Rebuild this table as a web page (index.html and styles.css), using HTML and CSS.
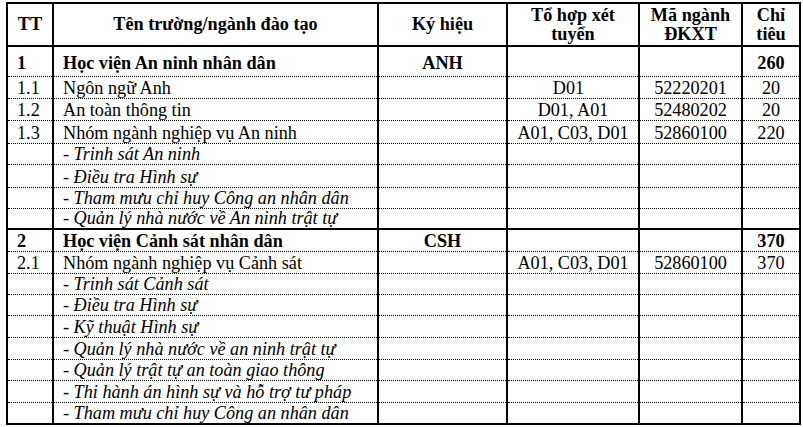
FILE: index.html
```html
<!DOCTYPE html>
<html lang="vi">
<head>
<meta charset="utf-8">
<title>Chỉ tiêu tuyển sinh</title>
<link rel="stylesheet" href="styles.css">
</head>
<body>
<table class="grid">
  <colgroup>
    <col class="c-tt"><col class="c-name"><col class="c-code"><col class="c-combo"><col class="c-major"><col class="c-quota">
  </colgroup>
  <thead>
    <tr class="head">
      <th>TT</th>
      <th>Tên trường/ngành đào tạo</th>
      <th>Ký hiệu</th>
      <th>Tổ hợp xét<br>tuyển</th>
      <th>Mã ngành<br>ĐKXT</th>
      <th>Chỉ<br>tiêu</th>
    </tr>
  </thead>
  <tbody>
    <tr class="school first h30">
      <td class="num">1</td><td>Học viện An ninh nhân dân</td><td class="ctr">ANH</td><td></td><td></td><td class="ctr">260</td>
    </tr>
    <tr class="h22">
      <td class="num">1.1</td><td>Ngôn ngữ Anh</td><td></td><td class="ctr">D01&nbsp;&nbsp;</td><td class="ctr">52220201</td><td class="ctr">20</td>
    </tr>
    <tr class="h22">
      <td class="num">1.2</td><td>An toàn thông tin</td><td></td><td class="ctr">D01, A01</td><td class="ctr">52480202</td><td class="ctr">20</td>
    </tr>
    <tr class="h23">
      <td class="num">1.3</td><td>Nhóm ngành nghiệp vụ An ninh</td><td></td><td class="ctr">A01, C03, D01</td><td class="ctr">52860100</td><td class="ctr">220</td>
    </tr>
    <tr class="sub h21">
      <td></td><td>- Trinh sát An ninh</td><td></td><td></td><td></td><td></td>
    </tr>
    <tr class="sub h23">
      <td></td><td>- Điều tra Hình sự</td><td></td><td></td><td></td><td></td>
    </tr>
    <tr class="sub h21">
      <td></td><td>- Tham mưu chỉ huy Công an nhân dân</td><td></td><td></td><td></td><td></td>
    </tr>
    <tr class="sub h21 end">
      <td></td><td>- Quản lý nhà nước về An ninh trật tự</td><td></td><td></td><td></td><td></td>
    </tr>
    <tr class="school h22">
      <td class="num">2</td><td>Học viện Cảnh sát nhân dân</td><td class="ctr">CSH</td><td></td><td></td><td class="ctr">370</td>
    </tr>
    <tr class="h22">
      <td class="num">2.1</td><td>Nhóm ngành nghiệp vụ Cảnh sát</td><td></td><td class="ctr">A01, C03, D01</td><td class="ctr">52860100</td><td class="ctr">370</td>
    </tr>
    <tr class="sub h21">
      <td></td><td>- Trinh sát Cảnh sát</td><td></td><td></td><td></td><td></td>
    </tr>
    <tr class="sub h21">
      <td></td><td>- Điều tra Hình sự</td><td></td><td></td><td></td><td></td>
    </tr>
    <tr class="sub h22">
      <td></td><td>- Kỹ thuật Hình sự</td><td></td><td></td><td></td><td></td>
    </tr>
    <tr class="sub h22">
      <td></td><td>- Quản lý nhà nước về an ninh trật tự</td><td></td><td></td><td></td><td></td>
    </tr>
    <tr class="sub h21">
      <td></td><td>- Quản lý trật tự an toàn giao thông</td><td></td><td></td><td></td><td></td>
    </tr>
    <tr class="sub h22">
      <td></td><td>- Thi hành án hình sự và hỗ trợ tư pháp</td><td></td><td></td><td></td><td></td>
    </tr>
    <tr class="sub h22 end">
      <td></td><td>- Tham mưu chỉ huy Công an nhân dân</td><td></td><td></td><td></td><td></td>
    </tr>
  </tbody>
</table>
</body>
</html>
```
FILE: styles.css
```css
html, body {
  margin: 0;
  padding: 0;
  background: #fff;
}
body {
  font-family: "Liberation Serif", "Times New Roman", serif;
  font-size: 18.2px;
  color: #000;
}
.grid {
  margin: 2px 0 0 6px;
  border-collapse: collapse;
  table-layout: fixed;
  width: 795px;
  border: 2px solid #000;
  font-family: "Liberation Serif", "Times New Roman", serif;
  font-size: 18.2px;
}
.c-tt { width: 46px; }
.c-name { width: 325px; }
.c-code { width: 129px; }
.c-combo { width: 132px; }
.c-major { width: 103px; }
.c-quota { width: 58px; }

.grid th,
.grid td {
  border-left: 2px solid #000;
  border-right: 2px solid #000;
  border-bottom: 1px dotted #000;
  padding: 0 0 0 9px;
  vertical-align: bottom;
  white-space: nowrap;
  line-height: 19px;
}
.grid th {
  font-weight: bold;
  text-align: center;
  vertical-align: middle;
  padding: 0;
  border-bottom: 2px solid #000;
}
.head { height: 43px; }
.h30 { height: 30px; }
.h23 { height: 23px; }
.h22 { height: 22px; }
.h21 { height: 21px; }

.grid td.ctr {
  text-align: center;
  padding-left: 0;
}
.grid .school td {
  font-weight: bold;
}
.grid .first td {
  padding-bottom: 3px;
}
.grid .sub td {
  font-style: italic;
}
.grid .end td {
  border-bottom: 2px solid #000;
}
```
